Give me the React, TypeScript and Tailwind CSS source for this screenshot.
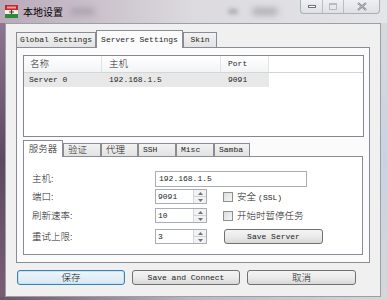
import React from "react";

const mono = "font-['Liberation_Mono','Noto_Sans_CJK_SC',monospace] text-[8px] leading-none text-[#262626]";
const cjk = "font-['Noto_Sans_CJK_SC',sans-serif] text-[9.5px] font-light leading-none text-[#1a1a1a]";
const btn =
  "h-[15px] rounded-[3px] border border-[#707070] bg-gradient-to-b from-[#f4f4f4] via-[#ebebeb] to-[#d8d8d8] flex items-center justify-center";

function TitleIcon() {
  return (
    <svg width="13" height="13" viewBox="0 0 13 13">
      <rect x="0" y="0" width="13" height="5" fill="#c8262a" />
      <rect x="0" y="5" width="13" height="4" fill="#f4f1ec" />
      <path d="M6.5 5 L6.5 9 M4 7 L9 7" stroke="#5a3a2a" strokeWidth="1.2" />
      <rect x="0" y="9" width="13" height="4" fill="#2f8a36" />
      <rect x="2" y="1.5" width="9" height="2" fill="#e9a19c" />
    </svg>
  );
}

function Spinner() {
  return (
    <div className="w-[13px] flex flex-col border-l border-[#d4d7db] bg-[#f2f2f2]">
      <div className="flex-1 flex items-center justify-center border-b border-[#cfd2d6]">
        <svg width="5" height="3" viewBox="0 0 5 3">
          <path d="M0 3 L2.5 0 L5 3 Z" fill="#6f7378" />
        </svg>
      </div>
      <div className="flex-1 flex items-center justify-center">
        <svg width="5" height="3" viewBox="0 0 5 3">
          <path d="M0 0 L2.5 3 L5 0 Z" fill="#6f7378" />
        </svg>
      </div>
    </div>
  );
}

function SpinInput({ value }: { value: string }) {
  return (
    <div className="w-[52px] h-[15px] flex border border-[#a9aeb5] bg-white">
      <div className={`${mono} flex-1 flex items-center pl-[2px]`}>{value}</div>
      <Spinner />
    </div>
  );
}

function Checkbox({ label }: { label: React.ReactNode }) {
  return (
    <div className="flex items-center gap-[4px] ml-[16px]">
      <div className="w-[10px] h-[10px] border border-[#8e8f8f] bg-gradient-to-br from-[#dcdcdc] to-[#f6f6f6]" />
      {label}
    </div>
  );
}

export default function App() {
  const outerTabs = [
    { name: "Global Settings", w: "w-[80px]", active: false },
    { name: "Servers Settings", w: "w-[87px]", active: true },
    { name: "Skin", w: "w-[34px]", active: false },
  ];
  const innerTabs = [
    { name: "服务器", w: "w-[40px]", active: true, cn: true },
    { name: "验证", w: "w-[38px]", active: false, cn: true },
    { name: "代理", w: "w-[37px]", active: false, cn: true },
    { name: "SSH", w: "w-[38px]", active: false, cn: false },
    { name: "Misc", w: "w-[38px]", active: false, cn: false },
    { name: "Samba", w: "w-[36px]", active: false, cn: false },
  ];

  return (
    <div className="w-[387px] h-[300px] overflow-hidden flex flex-col bg-[#d6d4da]">
      {/* title bar */}
      <div className="h-[23px] relative flex items-start bg-gradient-to-r from-[#b9a9b9] via-[#dcdadf] to-[#e4e5e8]">
        <div className="absolute left-[70px] top-[8px] w-[25px] h-[7px] rounded-full bg-[#a9a3ab] blur-[3px]" />
        <div className="absolute left-[228px] top-[9px] w-[10px] h-[5px] rounded-full bg-[#a9a9ad] blur-[2px]" />
        <div className="absolute left-[252px] top-[8px] w-[26px] h-[7px] rounded-full bg-[#aeaeb2] blur-[3px]" />
        <div className="ml-[5px] mt-[5px]">
          <TitleIcon />
        </div>
        <div className="font-['Noto_Sans_CJK_SC',sans-serif] text-[10px] leading-none ml-[5px] mt-[7px] text-black">
          本地设置
        </div>
        <div className="ml-auto mr-[7px] flex h-[14px] rounded-b-[4px] border border-t-0 border-[#aab0b8] bg-gradient-to-b from-[#eef0f3] to-[#dde0e5] overflow-hidden">
          <div className="w-[22px] flex items-center justify-center border-r border-[#b8bec6]">
            <div className="w-[8px] h-[3px] border border-[#6c727a] bg-white" />
          </div>
          <div className="w-[21px] flex items-center justify-center border-r border-[#b8bec6]">
            <div className="w-[8px] h-[7px] border border-[#b6bbc2] border-t-2" />
          </div>
          <div className="w-[35px] flex items-center justify-center">
            <svg width="10" height="9" viewBox="0 0 10 9">
              <path d="M1 1 L9 8 M9 1 L1 8" stroke="#7d828a" strokeWidth="2" />
              <path d="M1 1 L9 8 M9 1 L1 8" stroke="#e9ebee" strokeWidth="0.6" />
            </svg>
          </div>
        </div>
      </div>

      <div className="flex flex-1">
        <div className="w-[5px] bg-gradient-to-b from-[#8e7590] via-[#5b4a5f] to-[#7b5d73]" />
        <div className="w-[376px] h-[274px] bg-[#f0f0f0] border border-[#9aa0a8] pl-[10px] pt-[6px] flex flex-col">
          {/* outer tabs */}
          <div className="h-[17px] flex items-end">
            {outerTabs.map((t) =>
              t.active ? (
                <div
                  key={t.name}
                  className={`${t.w} h-[18px] -mb-[1px] relative z-10 bg-[#fbfbfb] border border-b-0 border-[#898c95] ${mono} flex items-center justify-center`}
                >
                  {t.name}
                </div>
              ) : (
                <div
                  key={t.name}
                  className={`${t.w} h-[15px] bg-gradient-to-b from-[#f2f2f2] to-[#e3e3e3] border border-b-0 border-[#898c95] ${mono} flex items-center justify-center`}
                >
                  {t.name}
                </div>
              )
            )}
          </div>
          <div className="w-[354px] h-[216px] border border-[#898c95] bg-[#fbfbfb] pl-[6px] pt-[7px] flex flex-col">
            {/* list view */}
            <div className="w-[341px] h-[82px] border border-[#828790] bg-white">
              <div className="flex h-[17px] border-b border-[#d5d5d5]">
                <div className={`w-[78px] ${cjk} flex items-center pl-[6px] bg-gradient-to-b from-white to-[#f3f4f6] border-r border-[#e2e3e5]`}>名称</div>
                <div className={`w-[119px] ${cjk} flex items-center pl-[7px] bg-gradient-to-b from-white to-[#f3f4f6] border-r border-[#e2e3e5]`}>主机</div>
                <div className={`w-[48px] ${mono} flex items-center pl-[7px] bg-gradient-to-b from-white to-[#f3f4f6] border-r border-[#e2e3e5]`}>Port</div>
              </div>
              <div className="flex h-[14px] w-[245px] bg-[#e8e8e8]">
                <div className={`w-[78px] ${mono} flex items-center pl-[5px]`}>Server 0</div>
                <div className={`w-[119px] ${mono} flex items-center pl-[7px]`}>192.168.1.5</div>
                <div className={`w-[48px] ${mono} flex items-center pl-[7px]`}>9091</div>
              </div>
            </div>

            {/* inner tabs */}
            <div className="h-[16px] mt-[3px] flex items-end">
              {innerTabs.map((t) => (
                <div
                  key={t.name}
                  className={`${t.w} ${t.active ? "h-[17px] -mb-[1px] relative z-10 bg-white" : "h-[13px] bg-gradient-to-b from-[#f2f2f2] to-[#e3e3e3]"} border border-b-0 border-[#898c95] flex items-center ${t.active ? "justify-center" : "pl-[4px]"} ${t.cn ? cjk : mono}`}
                >
                  {t.name}
                </div>
              ))}
            </div>
            <div className="w-[340px] h-[99px] border border-[#898c95] bg-white flex flex-col">
              <div className="flex items-center mt-[14px] h-[16px]">
                <div className={`w-[131px] pl-[8px] ${cjk}`}>主机:</div>
                <div className={`w-[152px] h-[16px] border border-[#a9aeb5] ${mono} flex items-center pl-[3px]`}>192.168.1.5</div>
              </div>
              <div className="flex items-center mt-[2px] h-[15px]">
                <div className={`w-[131px] pl-[8px] ${cjk}`}>端口:</div>
                <SpinInput value="9091" />
                <Checkbox
                  label={
                    <span className={cjk}>
                      安全 <span className={mono}>(SSL)</span>
                    </span>
                  }
                />
              </div>
              <div className="flex items-center mt-[4px] h-[15px]">
                <div className={`w-[131px] pl-[8px] ${cjk}`}>刷新速率:</div>
                <SpinInput value="10" />
                <Checkbox label={<span className={cjk}>开始时暂停任务</span>} />
              </div>
              <div className="flex items-center mt-[6px] h-[15px]">
                <div className={`w-[131px] pl-[8px] ${cjk}`}>重试上限:</div>
                <SpinInput value="3" />
                <div className={`${btn} w-[99px] h-[14px] ml-[17px] ${mono}`}>Save Server</div>
              </div>
            </div>
          </div>

          {/* bottom buttons */}
          <div className="flex gap-[7px] mt-[7px] ml-[1px]">
            <div className={`w-[108px] h-[15px] rounded-[3px] border border-[#3c7fb1] bg-gradient-to-b from-[#eef5fa] to-[#d8e8f3] shadow-[inset_0_0_0_1px_#c4e3f5] flex items-center justify-center ${cjk}`}>
              保存
            </div>
            <div className={`${btn} w-[108px] ${mono}`}>Save and Connect</div>
            <div className={`${btn} w-[109px] ${cjk}`}>取消</div>
          </div>
        </div>
        <div className="flex-1 bg-gradient-to-b from-[#d9d9dd] via-[#c9d3e0] to-[#d7d7da]" />
      </div>
      <div className="h-[3px] bg-gradient-to-r from-[#6e5468] via-[#bdb8c0] to-[#d6d6d9]" />
    </div>
  );
}
